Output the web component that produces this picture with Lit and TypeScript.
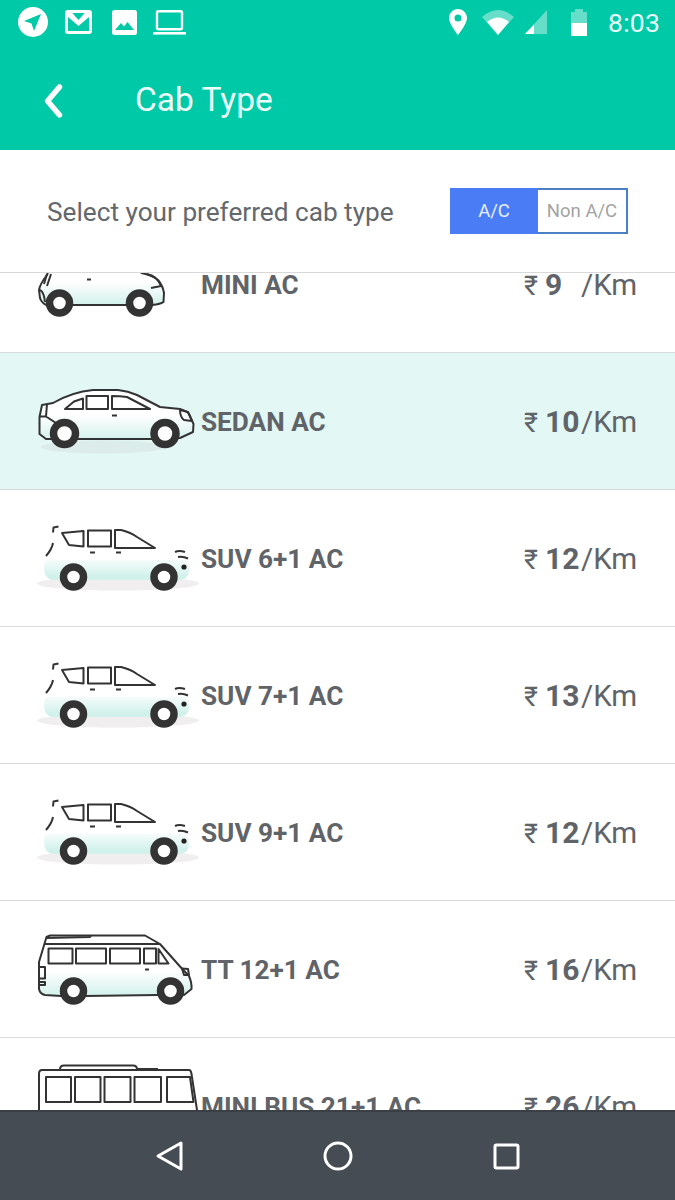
import { LitElement, html, css, svg } from "lit";
import { customElement } from "lit/decorators.js";

const wheel = (x: number, y: number, r = 13) => svg`<circle cx=${x} cy=${y} r=${r - 3} fill="#fff" stroke="#333" stroke-width="7.5"/>`;
const grad = (id: string, from: number, to: number) => svg`<defs><linearGradient id=${id} gradientUnits="userSpaceOnUse" x1="0" y1=${from} x2="0" y2=${to}><stop offset="0" stop-color="#fff"/><stop offset="1" stop-color="#d2f1eb"/></linearGradient></defs>`;

const mini = svg`
  ${grad("gm", 66, 89)}
  <path class="o" fill="url(#gm)" d="M46 89 Q41 86 40 82 L39 74 Q40 68 47 59 L52 45 H135 L141.5 57 Q152 59 158 64 Q163 70 164 77 L163.5 86 Q161 88 152 89 Z"/>
  <path class="t" d="M40 74 Q44 76 45 86 M47 58 L44 68 M51 58 L47 70 M147 58 Q157 60 161 70 L151 72"/>
  <path class="t" d="M87 63.5 H91"/>
  ${wheel(59.5, 87)}${wheel(139.5, 87)}
`;

const sedan = svg`
  ${grad("gs", 62, 88)}
  <ellipse cx="103" cy="94" rx="62" ry="6.5" fill="#d7e7e5" opacity=".7"/>
  <path class="o" fill="url(#gs)" d="M46 86 L39.5 81 V64 L42 52 L53 50 Q72 39 93 37 H118 Q128 38 137 42 L160 54 L180 56 Q187 58 189 61 L193.5 71 L193 79 L180 85 L152 86 H78 Z"/>
  <path class="t" d="M65 56 L74 48.5 L83 45.5 V56 Z M86.5 43 H108 V56 H86.5 Z M112 43 Q120 43 127 44 L150 56 H112 Z"/>
  <path class="t" d="M47 51 L46 63.5 L56 70 M39.5 63.5 H46 M180 57 L188 59 L192 68 L184 67 Q180 64 180 57Z"/>
  <path class="t" d="M112 62.5 H117"/>
  ${wheel(64.5, 80.5, 14)}${wheel(165, 80.5, 14)}
`;

const suv = (id: string) => svg`
  ${grad(id, 66, 86)}
  <ellipse cx="118" cy="93.5" rx="81" ry="7" fill="#f0eeee"/>
  <path fill="url(#${id})" d="M45 70 H186 Q191 78 188 85 Q186 90 178 90 H52 Q44 88 44 78 Z"/>
  <path class="t" d="M62 43 L83.5 41 V56.5 L69 55 Z M88 40.5 H111 V56.5 H88 Z M115 40 H121 Q130 42 137 47 L155 58 H115 Z"/>
  <path class="t" d="M53 42.5 L53.5 37.5 L58.5 36.5 M46 66 Q52 59 53 53"/>
  <path class="t" d="M175 62 Q179 60 185 62 M178 67 Q183 66 188 68.5 M90 62.5 H95 M116 62.5 H121"/>
  <circle cx="184" cy="77" r="2.6" fill="#222"/>
  ${wheel(73.5, 87)}${wheel(164, 87)}
`;

const tt = svg`
  ${grad("gt", 70, 95)}
  <path class="o" fill="url(#gt)" d="M39 88 V61 L46.5 36 L50 34.5 H145 L160 43 L180 65.5 L189 75 Q192 82 191.5 88 L184 94 H158 L85 95 H61 L45 94 Q40 93 39 88 Z"/>
  <path class="t" d="M46.5 37 L90 36 L91 34.5 M44 43 H160"/>
  <path class="t" d="M48.5 47.5 H72.5 V62.5 H48.5 Z M76 47.5 H106 V62.5 H76 Z M110 47.5 H140 V62.5 H110 Z M144 47.5 H156 V62.5 H144 Z M158.5 48 L168.5 62.5 H158.5 Z"/>
  <path class="t" d="M39 66 H45 V77.5 H39 M39 81 H45 V84 H39 M145 68.5 H149 M182 67.5 L188 68 L189 74 L184 74 Z"/>
  ${wheel(73.5, 90)}${wheel(170.5, 90)}
`;

const bus = svg`
  <path class="o" fill="#fff" d="M39 90 V36 Q39 32 42 32 H189 Q191 32 191.5 36 L197 72 V90 Z"/>
  <path class="t" d="M60 31.5 Q60 27.5 64 27.5 H133 Q137 27.5 137 31.5 M137 31 H158"/>
  <path class="t" d="M46 39 H71 V64 H46 Z M75 39 H100.5 V64 H75 Z M104.5 39 H130.5 V64 H104.5 Z M134.5 39 H161 V64 H134.5 Z M167 39 H190 L193.5 64 H167 Z"/>
`;

interface Cab { name: string; price: string; art: unknown; active?: boolean }
const cabs: Cab[] = [
  { name: "MINI AC", price: "9", art: mini },
  { name: "SEDAN AC", price: "10", art: sedan, active: true },
  { name: "SUV 6+1 AC", price: "12", art: suv("g1") },
  { name: "SUV 7+1 AC", price: "13", art: suv("g2") },
  { name: "SUV 9+1 AC", price: "12", art: suv("g3") },
  { name: "TT 12+1 AC", price: "16", art: tt },
  { name: "MINI BUS 21+1 AC", price: "26", art: bus },
];

@customElement("app-root")
export class AppRoot extends LitElement {
  static styles = css`
    :host { display: flex; flex-direction: column; height: 1200px; width: 675px; overflow: hidden; background: #fff; font-family: Roboto, "Liberation Sans", sans-serif; }
    .head { height: 150px; flex: none; background: #00c9a7; color: #eafff9; display: flex; flex-direction: column; }
    .status { height: 44px; flex: none; display: flex; align-items: center; padding: 0 15px 0 18px; }
    .status svg { display: block; flex: none; }
    .spacer { flex: 1; }
    .time { font-size: 26.5px; color: #e6fff8; margin-left: 21px; letter-spacing: .2px; }
    .bar { flex: 1; display: flex; align-items: center; padding: 4px 0 0 40px; }
    .chev { flex: none; margin: 4px 70px 0 0; }
    .title { font-size: 33.5px; }
    .sub { flex: none; box-sizing: border-box; display: flex; align-items: center; justify-content: space-between; padding: 0 47px; border-bottom: 1px solid #d9d9d9; height: 123px; }
    .sub span.l { font-size: 26.2px; color: #63686c; margin-top: 2px; }
    .toggle { display: flex; width: 178px; height: 46px; font-size: 18.5px; }
    .on { width: 88px; background: #4a7df5; color: #e8efff; display: flex; align-items: center; justify-content: center; }
    .off { flex: 1; border: 2px solid #4a80c4; border-left: none; color: #a3a3a3; display: flex; align-items: center; justify-content: center; }
    .list { flex: 1; overflow: hidden; min-height: 0; }
    .rows { margin-top: -57px; }
    .row { height: 137px; box-sizing: border-box; display: flex; align-items: center; border-bottom: 1px solid #dadada; padding-right: 35px; background: #fff; color: #606468; }
    .row.active { background: #e3f7f5; }
    .art { width: 201px; height: 136px; flex: none; display: block; }
    .art .o { stroke: #333; stroke-width: 2; stroke-linejoin: round; }
    .art .t { stroke: #333; stroke-width: 2; fill: none; stroke-linejoin: round; }
    .name { flex: 1; font-size: 26.2px; font-weight: 700; white-space: nowrap; margin-top: 2px; }
    .price { display: flex; align-items: baseline; flex: none; width: 116px; }
    .rs { font-size: 27px; width: 21px; flex: none; }
    .num { font-size: 30px; font-weight: 700; width: 36px; flex: none; }
    .km { font-size: 29.5px; }
    .nav { height: 90px; flex: none; background: #454c53; border-top: 2px solid #3a3f46; box-sizing: border-box; display: flex; align-items: center; justify-content: center; gap: 138px; }
    .nav svg { display: block; flex: none; }
  `;

  render() {
    return html`
      <div class="head">
        <div class="status">
          <svg width="30" height="30" viewBox="0 0 30 30"><circle cx="15" cy="15" r="15" fill="#fff"/><path d="M23 7 L6 14 L13.5 16.5 L16 24 Z" fill="#00c9a7"/></svg>
          <svg style="margin-left:17px" width="27" height="24" viewBox="0 0 27 24"><rect x="1.5" y="1.5" width="24" height="21" rx="1.5" fill="none" stroke="#fff" stroke-width="3"/><path d="M3 2 L6.5 2 L13.5 10 L20.5 2 L24 2 L24 7 L13.5 16 L3 7 Z" fill="#fff"/></svg>
          <svg style="margin-left:20px" width="25" height="25" viewBox="0 0 25 25"><rect width="25" height="25" rx="2.5" fill="#fff"/><path d="M3 20 L9 13 L12 16.5 L15.5 12 L22 20 Z" fill="#00c9a7"/></svg>
          <svg style="margin-left:16px" width="33" height="25" viewBox="0 0 33 25"><rect x="4" y="1.2" width="25" height="18" rx="1.5" fill="none" stroke="#fff" stroke-width="2.4"/><rect x="0" y="22" width="33" height="2.6" fill="#fff"/></svg>
          <div class="spacer"></div>
          <svg width="18" height="26" viewBox="0 0 18 26"><path fill-rule="evenodd" d="M9 0 C4 0 0 4 0 9 C0 15 9 26 9 26 C9 26 18 15 18 9 C18 4 14 0 9 0 Z M9 5.5 A3.5 3.5 0 1 1 9 12.5 A3.5 3.5 0 1 1 9 5.5 Z" fill="#fff"/></svg>
          <svg style="margin-left:15px" width="32" height="26" viewBox="0 0 32 26"><path d="M0 8 Q16 -6 32 8 L16 26 Z" fill="#fff" opacity=".4"/><path d="M5 13 Q16 4 27 13 L16 26 Z" fill="#fff"/></svg>
          <svg style="margin-left:11px" width="22" height="24" viewBox="0 0 22 24"><path d="M0 24 L22 0 V24 Z" fill="#fff" opacity=".4"/><path d="M0 24 L9 14.5 V24 Z" fill="#fff"/></svg>
          <svg style="margin-left:24px" width="16" height="27" viewBox="0 0 16 27"><path d="M0 3 H4 V0 H12 V3 H16 V14 H0 Z" fill="#fff" opacity=".4"/><rect y="14" width="16" height="13" fill="#fff"/></svg>
          <span class="time">8:03</span>
        </div>
        <div class="bar">
          <svg class="chev" width="25" height="36" viewBox="0 0 25 36"><path d="M19.5 4 L7.5 18 L19.5 32" fill="none" stroke="#fff" stroke-width="5.5" stroke-linecap="round" stroke-linejoin="round"/></svg>
          <span class="title">Cab Type</span>
        </div>
      </div>
      <div class="sub">
        <span class="l">Select your preferred cab type</span>
        <div class="toggle"><div class="on">A/C</div><div class="off">Non A/C</div></div>
      </div>
      <div class="list"><div class="rows">
        ${cabs.map((c) => html`
          <div class="row ${c.active ? "active" : ""}">
            <svg class="art" viewBox="0 0 201 136">${c.art}</svg>
            <span class="name">${c.name}</span>
            <span class="price"><span class="rs">₹</span><span class="num">${c.price}</span><span class="km">/Km</span></span>
          </div>`)}
      </div></div>
      <div class="nav">
        <svg width="30" height="32" viewBox="0 0 30 32"><path d="M26 3 L3 16 L26 29 Z" fill="none" stroke="#fff" stroke-width="3" stroke-linejoin="round"/></svg>
        <svg width="30" height="30" viewBox="0 0 30 30"><circle cx="15" cy="15" r="13" fill="none" stroke="#fff" stroke-width="3"/></svg>
        <svg width="30" height="30" viewBox="0 0 30 30"><rect x="4" y="4" width="23" height="23" rx="1.5" fill="none" stroke="#fff" stroke-width="3"/></svg>
      </div>
    `;
  }
}
